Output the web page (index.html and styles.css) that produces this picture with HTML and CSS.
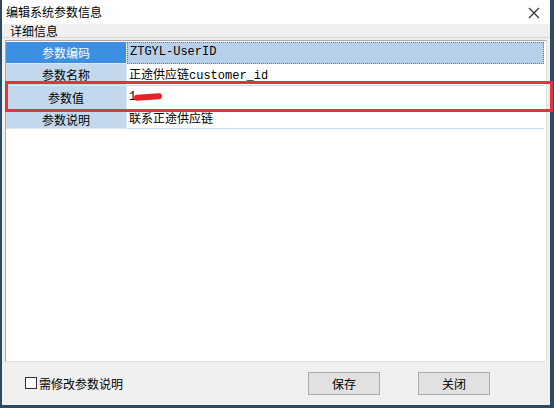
FILE: index.html
```html
<!DOCTYPE html>
<html lang="zh">
<head>
<meta charset="utf-8">
<link rel="stylesheet" href="styles.css">
</head>
<body>
<div class="win">
  <div class="titlebar">
    <span class="title">编辑系统参数信息</span>
    <svg class="close" width="12" height="12" viewBox="0 0 12 12"><path d="M1 1L11 11M11 1L1 11" stroke="#333" stroke-width="1.2" fill="none"/></svg>
  </div>
  <div class="sechead">详细信息</div>
  <div class="panel">
    <div class="grid">
      <div class="lab sel">参数编码</div><div class="val selv">ZTGYL-UserID</div>
      <div class="lab">参数名称</div><div class="val">正途供应链customer_id</div>
      <div class="lab tall">参数值</div><div class="val tall"><span>1</span><span class="redact"></span></div>
      <div class="lab">参数说明</div><div class="val">联系正途供应链</div>
    </div>
    <div class="highlight"></div>
  </div>
  <div class="footer">
    <label class="chk"><span class="box"></span>需修改参数说明</label>
    <div class="btns">
      <button class="btn">保存</button>
      <button class="btn">关闭</button>
    </div>
  </div>
</div>
</body>
</html>
```
FILE: styles.css
```css
* { box-sizing: border-box; }
html, body { margin: 0; padding: 0; }
body {
  width: 554px; height: 408px;
  background: #2e4a63;
  font-family: "Noto Sans CJK SC", "Liberation Sans", sans-serif;
  font-size: 12px;
  color: #000;
  overflow: hidden;
}
.win {
  margin-left: 2px;
  width: 548px;
  height: 405px;
  background: #f0f0f0;
  display: flex;
  flex-direction: column;
}
.titlebar {
  height: 24px;
  background: #fff;
  display: flex;
  align-items: center;
  justify-content: space-between;
  padding: 0 10px 0 4px;
}
.title { font-size: 12px; line-height: 24px; }
.close { margin-top: 1px; }
.sechead {
  height: 14px;
  line-height: 13px;
  padding-left: 8px;
  background: #f0f0f0;
  border-bottom: 1px solid #d8d8d8;
}
.panel {
  position: relative;
  margin: 2px 3px 0 3px;
  height: 322px;
  background: #fff;
  border: 1px solid #a8a8a8;
  border-right-color: #e0e0e0;
  border-bottom-color: #e0e0e0;
  padding-top: 1px;
}
.grid {
  display: grid;
  grid-template-columns: 121px 1fr;
  grid-template-rows: 22px 22px 24px 19px;
  margin-right: 2px;
}
.lab {
  background: #c4d8ed;
  border-bottom: 1px solid #dce8f4;
  border-right: 1px solid #dce8f4;
  display: flex; align-items: center; justify-content: center;
  font-size: 12px;
}
.lab.sel { background: #3c8fe3; color: #fff; }
.val {
  border-bottom: 1px solid #c8dbee;
  display: flex; align-items: center;
  padding-left: 2px;
  padding-bottom: 2px;
  font-family: "Liberation Mono", "Noto Sans CJK SC", monospace;
  font-size: 12px;
}
.val.selv {
  background: #b8d0ea;
  border: 1px dotted #6a7a8a;
}
.redact {
  display: inline-block;
  width: 28px; height: 6px;
  background: #e8202a;
  border-radius: 3px;
  margin-left: -2px;
  transform: rotate(-4deg);
}
.highlight {
  position: absolute;
  left: -1px; top: 40px;
  width: 548px; height: 31px;
  border: 3px solid #e0353d;
}
.footer {
  flex: 1;
  display: flex;
  align-items: center;
  justify-content: space-between;
  padding: 0 60px 1px 23px;
}
.chk { display: flex; align-items: center; gap: 2px; }
.box {
  width: 12px; height: 12px;
  border: 1px solid #333;
  background: #fff;
}
.btns { display: flex; gap: 38px; }
.btn {
  width: 72px; height: 23px;
  background: #e1e1e1;
  border: 1px solid #adadad;
  font-family: inherit;
  font-size: 12px;
  padding: 0;
}
```
